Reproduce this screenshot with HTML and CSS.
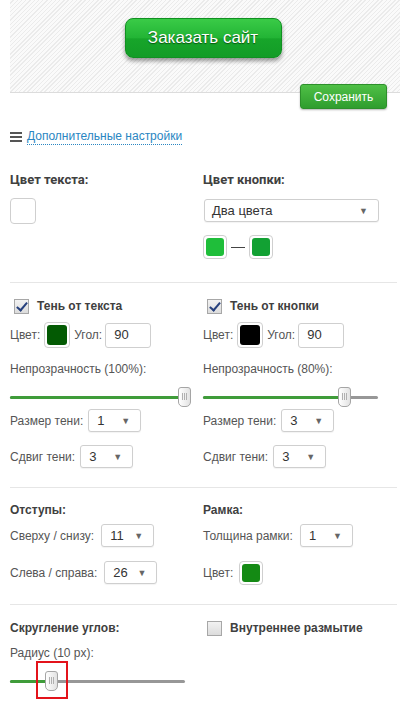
FILE: index.html
```html
<!DOCTYPE html>
<html lang="ru">
<head>
	<meta charset="UTF-8">
	<title>Настройки кнопки</title>
	<link rel="stylesheet" href="styles.css">
</head>
<body>
<div class="preview">
	<a class="order-btn">Заказать сайт</a>
</div>
<div class="toolbar">
	<button class="save-btn">Сохранить</button>
</div>
<div class="more">
	<span class="burger"><i></i><i></i><i></i></span>
	<a class="more-link">Дополнительные настройки</a>
</div>

<!-- цвета -->
<div class="group group-colors">
	<div class="col">
		<div class="title">Цвет текста:</div>
		<div class="row r-swatch"><span class="swatch big"><b class="white"></b></span></div>
	</div>
	<div class="col">
		<div class="title">Цвет кнопки:</div>
		<div class="row r-select"><span class="select wide">Два цвета<em>▼</em></span></div>
		<div class="row r-pair">
			<span class="swatch"><b class="green1"></b></span>
			<span class="dash"></span>
			<span class="swatch"><b class="green2"></b></span>
		</div>
	</div>
</div>

<!-- тени -->
<div class="group group-shadow">
	<div class="col">
		<div class="title check-title"><span class="check on"></span>Тень от текста</div>
		<div class="row r-color">
			<span>Цвет:</span><span class="swatch big"><b class="dark"></b></span>
			<span>Угол:</span><span class="input">90</span>
		</div>
		<div class="row r-label">Непрозрачность (100%):</div>
		<div class="slider s1"><div class="fill" style="width:172px"></div><span class="knob" style="left:168px"></span></div>
		<div class="row r-size">Размер тени: <span class="select">1<em>▼</em></span></div>
		<div class="row r-shift">Сдвиг тени: <span class="select">3<em>▼</em></span></div>
	</div>
	<div class="col">
		<div class="title check-title"><span class="check on"></span>Тень от кнопки</div>
		<div class="row r-color">
			<span>Цвет:</span><span class="swatch big"><b class="black"></b></span>
			<span>Угол:</span><span class="input">90</span>
		</div>
		<div class="row r-label">Непрозрачность (80%):</div>
		<div class="slider s2"><div class="fill" style="width:138px"></div><span class="knob" style="left:135px"></span></div>
		<div class="row r-size">Размер тени: <span class="select">3<em>▼</em></span></div>
		<div class="row r-shift">Сдвиг тени: <span class="select">3<em>▼</em></span></div>
	</div>
</div>

<!-- отступы и рамка -->
<div class="group group-pad">
	<div class="col">
		<div class="title">Отступы:</div>
		<div class="row r-first">Сверху / снизу: <span class="select">11<em>▼</em></span></div>
		<div class="row r-second">Слева / справа: <span class="select">26<em>▼</em></span></div>
	</div>
	<div class="col">
		<div class="title">Рамка:</div>
		<div class="row r-first">Толщина рамки: <span class="select">1<em>▼</em></span></div>
		<div class="row r-second r-border"><span>Цвет:</span><span class="swatch"><b class="green3"></b></span></div>
	</div>
</div>

<!-- скругление -->
<div class="group group-radius">
	<div class="col">
		<div class="title">Скругление углов:</div>
		<div class="row r-label">Радиус (10 px):</div>
		<div class="slider s3"><div class="fill" style="width:40px"></div><span class="knob" style="left:35px"></span><span class="mark"></span></div>
	</div>
	<div class="col">
		<div class="title check-title"><span class="check"></span>Внутреннее размытие</div>
	</div>
</div>
</body>
</html>
```

FILE: styles.css
```css
body {
  margin: 0;
  font: 12px/16px "Liberation Sans", Arial, sans-serif;
  color: #555;
  background: #fff;
}

/* превью */
.preview {
  margin-left: 10px;
  height: 93px;
  border-bottom: 1px solid #dcdcdc;
  background-color: #f7f7f7;
  background-image: repeating-linear-gradient(135deg, #fafafa 0, #fafafa 2px, #ebebeb 2px, #ebebeb 3px);
  display: flex;
  justify-content: center;
  align-items: flex-start;
  padding-top: 18px;
  box-sizing: border-box;
}
.order-btn {
  display: flex;
  align-items: center;
  justify-content: center;
  width: 157px;
  height: 40px;
  box-sizing: border-box;
  margin-left: -4px;
  border: 1px solid #119022;
  border-radius: 8px;
  background: linear-gradient(#3acb47 0%, #22b435 50%, #17a52a 52%, #139c27 100%);
  box-shadow: 0 3px 4px rgba(0,0,0,.4);
  color: #fff;
  font-size: 17px;
  text-shadow: 0 1px 1px rgba(0,50,0,.7);
}

.toolbar {
  display: flex;
  justify-content: flex-end;
  padding-right: 13px;
  margin-top: -9px;
}
.save-btn {
  width: 87px;
  height: 25px;
  border: 1px solid #2d8f2b;
  border-radius: 3px;
  background: linear-gradient(#4fc046, #2f9d2e);
  box-shadow: 0 1px 2px rgba(0,0,0,.3);
  color: #fff;
  font: 12px "Liberation Sans", Arial, sans-serif;
  padding: 0;
}

.more {
  display: flex;
  align-items: center;
  gap: 5px;
  margin: 20px 0 0 10px;
  height: 16px;
}
.burger {
  display: flex;
  flex-direction: column;
  gap: 2px;
  width: 12px;
}
.burger i {
  display: block;
  height: 2px;
  background: #555;
}
.more-link {
  color: #2a86c2;
  border-bottom: 1px dotted #2a86c2;
  line-height: 15px;
}

/* группы */
.group {
  display: grid;
  grid-template-columns: 193px 1fr;
  margin: 0 3px 0 10px;
  border-top: 1px solid #e6e6e6;
}
.group-colors {
  border-top: 0;
  padding: 27px 0 23px;
}
.group-colors .title {
  font: bold 13px/16px Roboto, "Liberation Sans", sans-serif;
}
.group-shadow { padding: 15px 0 19px; }
.group-pad { padding: 14px 0 19px; }
.group-radius { padding: 15px 0 16px; }

.title {
  font-weight: bold;
  color: #404040;
  height: 16px;
}
.row {
  display: flex;
  align-items: center;
  gap: 4px;
}
.check-title {
  display: flex;
  align-items: center;
  gap: 8px;
  padding-left: 4px;
}

.r-swatch { margin-top: 10px; }
.r-select { margin-top: 11px; }
.r-pair { margin-top: 13px; gap: 0; }
.r-color { margin-top: 8px; }
.r-label { margin-top: 13px; }
.r-size { margin-top: 10px; }
.r-shift { margin-top: 13px; }
.r-first { margin-top: 6px; }
.r-second { margin-top: 14px; }
.r-border { gap: 6px; }
.group-radius .r-label { margin-top: 9px; }

/* контролы */
.swatch {
  display: inline-flex;
  width: 24px;
  height: 24px;
  padding: 2px;
  box-sizing: border-box;
  border: 1px solid #cfcfcf;
  border-radius: 4px;
  background: #fff;
}
.swatch.big { width: 26px; height: 26px; }
.swatch b {
  flex: 1;
  border-radius: 3px;
}
.swatch .white { background: #fff; }
.swatch .green1 { background: #1fbe3a; }
.swatch .green2 { background: #12a133; }
.swatch .green3 { background: #148a14; }
.swatch .dark { background: #035a03; }
.swatch .black { background: #000; }
.dash {
  width: 14px;
  height: 1px;
  margin: 0 4px;
  background: #444;
}

.select {
  position: relative;
  display: inline-flex;
  align-items: center;
  width: 53px;
  height: 23px;
  box-sizing: border-box;
  padding-left: 8px;
  border: 1px solid #cfcfcf;
  border-radius: 3px;
  background: #fff;
  box-shadow: 0 1px 1px rgba(0,0,0,.05);
  color: #333;
  font-size: 13px;
}
.select.wide {
  width: 175px;
  height: 23px;
  padding-left: 7px;
}
.select em {
  position: absolute;
  right: 10px;
  top: 6px;
  font-style: normal;
  font-size: 9px;
  line-height: 10px;
  color: #666;
}
.row .select { margin-left: 1px; }
.r-first .select, .r-second .select { margin-left: 3px; }

.input {
  display: inline-flex;
  align-items: center;
  width: 46px;
  height: 25px;
  box-sizing: border-box;
  padding-left: 8px;
  margin-left: -1px;
  border: 1px solid #cfcfcf;
  border-radius: 3px;
  color: #333;
  font-size: 13px;
}

.check {
  display: inline-block;
  width: 13px;
  height: 13px;
  border: 1px solid #a7a7a7;
  background: linear-gradient(#f2f2f2, #dcdcdc);
  position: relative;
}
.check.on::after {
  content: "";
  position: absolute;
  left: 4px;
  top: 0;
  width: 4px;
  height: 9px;
  border: solid #26407d;
  border-width: 0 2px 2px 0;
  transform: rotate(40deg);
}

/* слайдеры */
.slider {
  position: relative;
  height: 3px;
  background: #979797;
  border-radius: 2px;
  margin-top: 19px;
  margin-bottom: 9px;
}
.s1 { width: 178px; }
.s2 { width: 175px; }
.s3 { width: 175px; }
.slider .fill {
  height: 3px;
  border-radius: 2px;
  background: #3f9c3a;
}
.knob {
  position: absolute;
  top: -9px;
  width: 11px;
  height: 18px;
  border: 1px solid #a5a5a5;
  border-radius: 3px 3px 5px 5px;
  background: linear-gradient(90deg, #fff, #e2e2e2);
}
.knob::after {
  content: "";
  position: absolute;
  left: 3px;
  top: 5px;
  width: 5px;
  height: 7px;
  background: repeating-linear-gradient(90deg, #b0b0b0 0, #b0b0b0 1px, transparent 1px, transparent 2px);
}
.mark {
  position: absolute;
  left: 26px;
  top: -19px;
  width: 28px;
  height: 34px;
  border: 2px solid #e3131b;
}
```
